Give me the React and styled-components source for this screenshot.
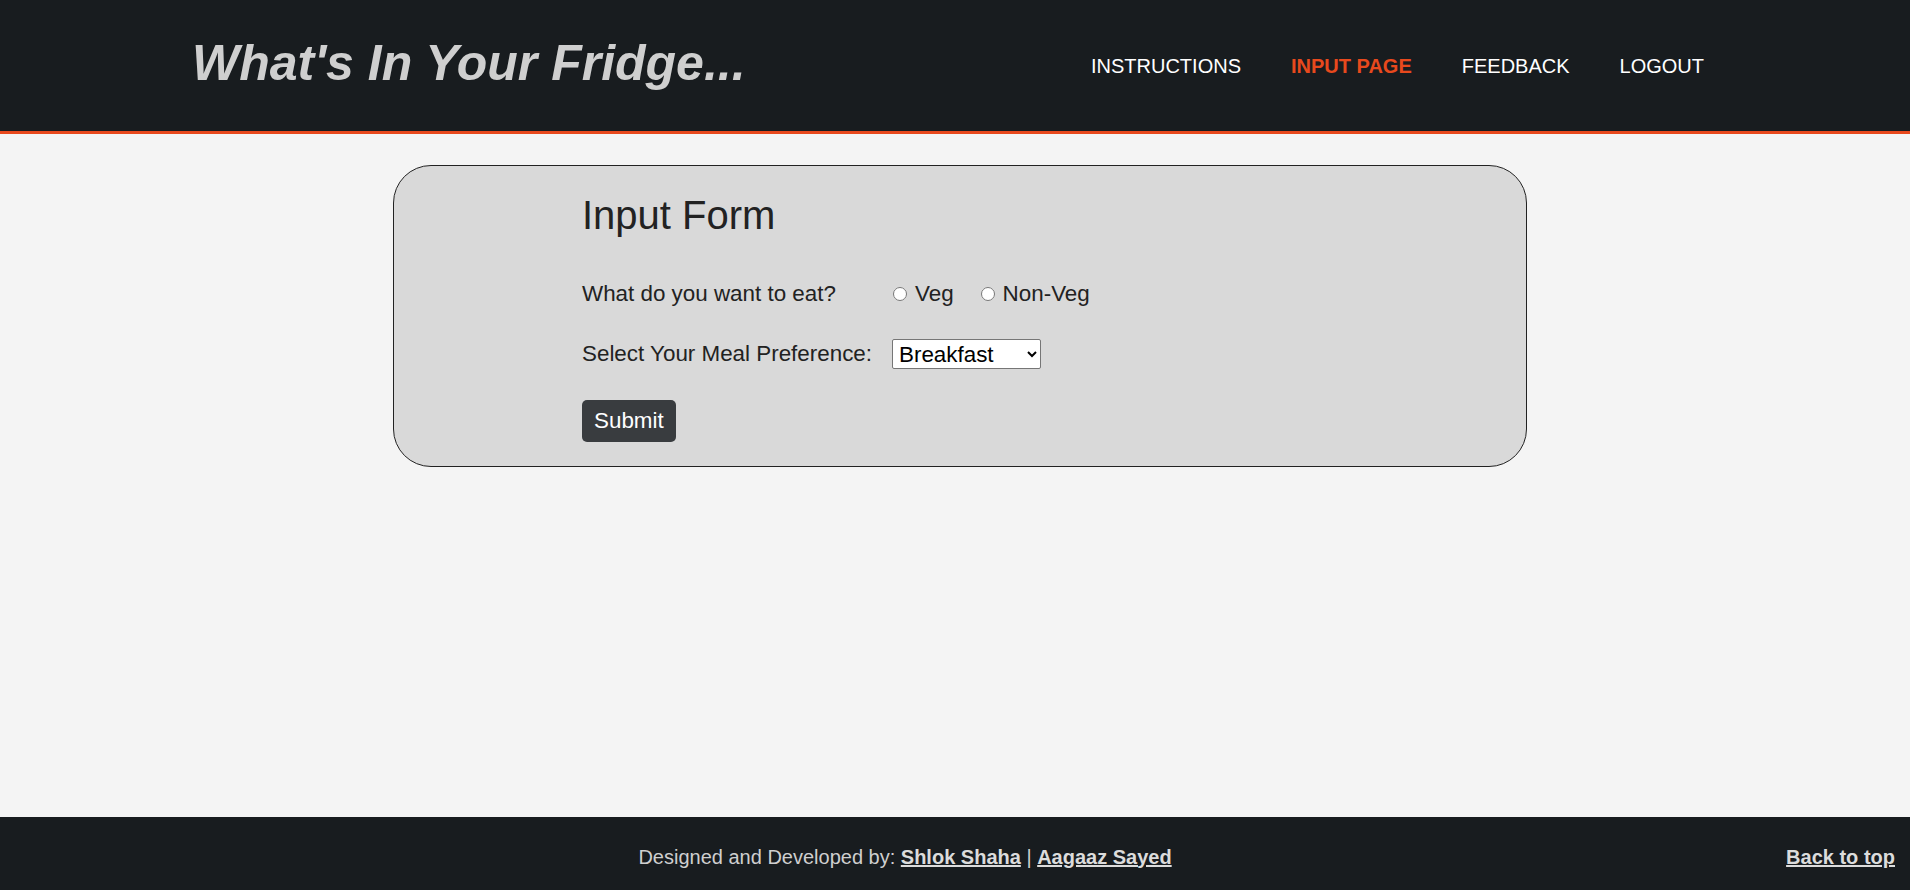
import React from "react";
import styled, { createGlobalStyle } from "styled-components";

const GlobalStyle = createGlobalStyle`
	html, body {
		margin: 0;
		padding: 0;
		background: #f4f4f4;
		font-family: "Liberation Sans", Arial, sans-serif;
	}
`;

const Page = styled.div`
	min-height: 100vh;
	display: flex;
	flex-direction: column;
`;

const Header = styled.header`
	background: #181c1f;
	border-bottom: 3px solid #e8491d;
	height: 131px;
	display: flex;
	align-items: center;
	justify-content: space-between;
	padding: 0 206px 0 192px;
`;

const Brand = styled.h1`
	margin: 0 0 6px 0;
	font-size: 50px;
	line-height: 50px;
	font-style: italic;
	font-weight: bold;
	color: #cfcfcf;
`;

const Nav = styled.nav`
	display: flex;
	gap: 50px;
`;

const NavLink = styled.a`
	font-size: 20px;
	line-height: 20px;
	text-transform: uppercase;
	text-decoration: none;
	color: ${props => (props.active ? "#e8491d" : "#ffffff")};
	font-weight: ${props => (props.active ? "bold" : "normal")};
`;

const Main = styled.main`
	flex: 1;
	padding: 31px 0 0 10px;
`;

const Card = styled.section`
	width: 1134px;
	box-sizing: border-box;
	margin: 0 auto;
	background: #d9d9d9;
	border: 1px solid #222;
	border-radius: 38px;
	padding: 26px 0 24px 188px;
	color: #222;
`;

const Title = styled.h2`
	margin: 0 0 43px 0;
	font-size: 40px;
	line-height: 46px;
	font-weight: normal;
`;

const Row = styled.div`
	display: grid;
	grid-template-columns: 310px auto;
	align-items: center;
	height: ${props => props.h}px;
	margin-bottom: ${props => props.gap}px;
	font-size: 22.4px;
	line-height: 26px;
`;

const Choices = styled.div`
	display: flex;
	align-items: center;
`;

const Radio = styled.input`
	width: 14px;
	height: 14px;
	margin: 0 8px 0 ${props => (props.first ? 1 : 27)}px;
`;

const Select = styled.select`
	width: 149px;
	height: 30px;
	font-family: "Liberation Sans", Arial, sans-serif;
	font-size: 22.4px;
	color: #000;
	background: #fff;
	border: 1px solid #767676;
	border-radius: 2px;
	padding: 0 2px;
`;

const Button = styled.button`
	display: block;
	height: 42px;
	padding: 0 12px;
	font-family: "Liberation Sans", Arial, sans-serif;
	font-size: 22.4px;
	color: #fff;
	background: #393c3f;
	border: none;
	border-radius: 5px;
`;

const Footer = styled.footer`
	background: #181c1f;
	height: 73px;
	box-sizing: border-box;
	display: grid;
	grid-template-columns: 1fr auto;
	align-items: center;
	padding: 7px 15px 0 24px;
	font-size: 20px;
	color: #cfcfcf;
`;

const Credits = styled.p`
	margin: 0;
	text-align: center;
`;

const FootLink = styled.a`
	color: #dcdcdc;
	font-weight: bold;
	text-decoration: underline;
`;

const App = () => {
	return (
		<Page>
			<GlobalStyle />
			<Header>
				<Brand>What's In Your Fridge...</Brand>
				<Nav>
					<NavLink href="#">Instructions</NavLink>
					<NavLink href="#" active>
						Input Page
					</NavLink>
					<NavLink href="#">Feedback</NavLink>
					<NavLink href="#">Logout</NavLink>
				</Nav>
			</Header>

			<Main>
				<Card>
					<Title>Input Form</Title>
					<Row h={26} gap={32}>
						<span>What do you want to eat?</span>
						<Choices>
							<Radio type="radio" name="diet" first />
							<span>Veg</span>
							<Radio type="radio" name="diet" />
							<span>Non-Veg</span>
						</Choices>
					</Row>
					<Row h={30} gap={31}>
						<span>Select Your Meal Preference:</span>
						<div>
							<Select defaultValue="Breakfast">
								<option>Breakfast</option>
								<option>Lunch</option>
								<option>Dinner</option>
							</Select>
						</div>
					</Row>
					<Button>Submit</Button>
				</Card>
			</Main>

			<Footer>
				<Credits>
					Designed and Developed by: <FootLink href="#">Shlok Shaha</FootLink> |{" "}
					<FootLink href="#">Aagaaz Sayed</FootLink>
				</Credits>
				<FootLink href="#">Back to top</FootLink>
			</Footer>
		</Page>
	);
};

export default App;
